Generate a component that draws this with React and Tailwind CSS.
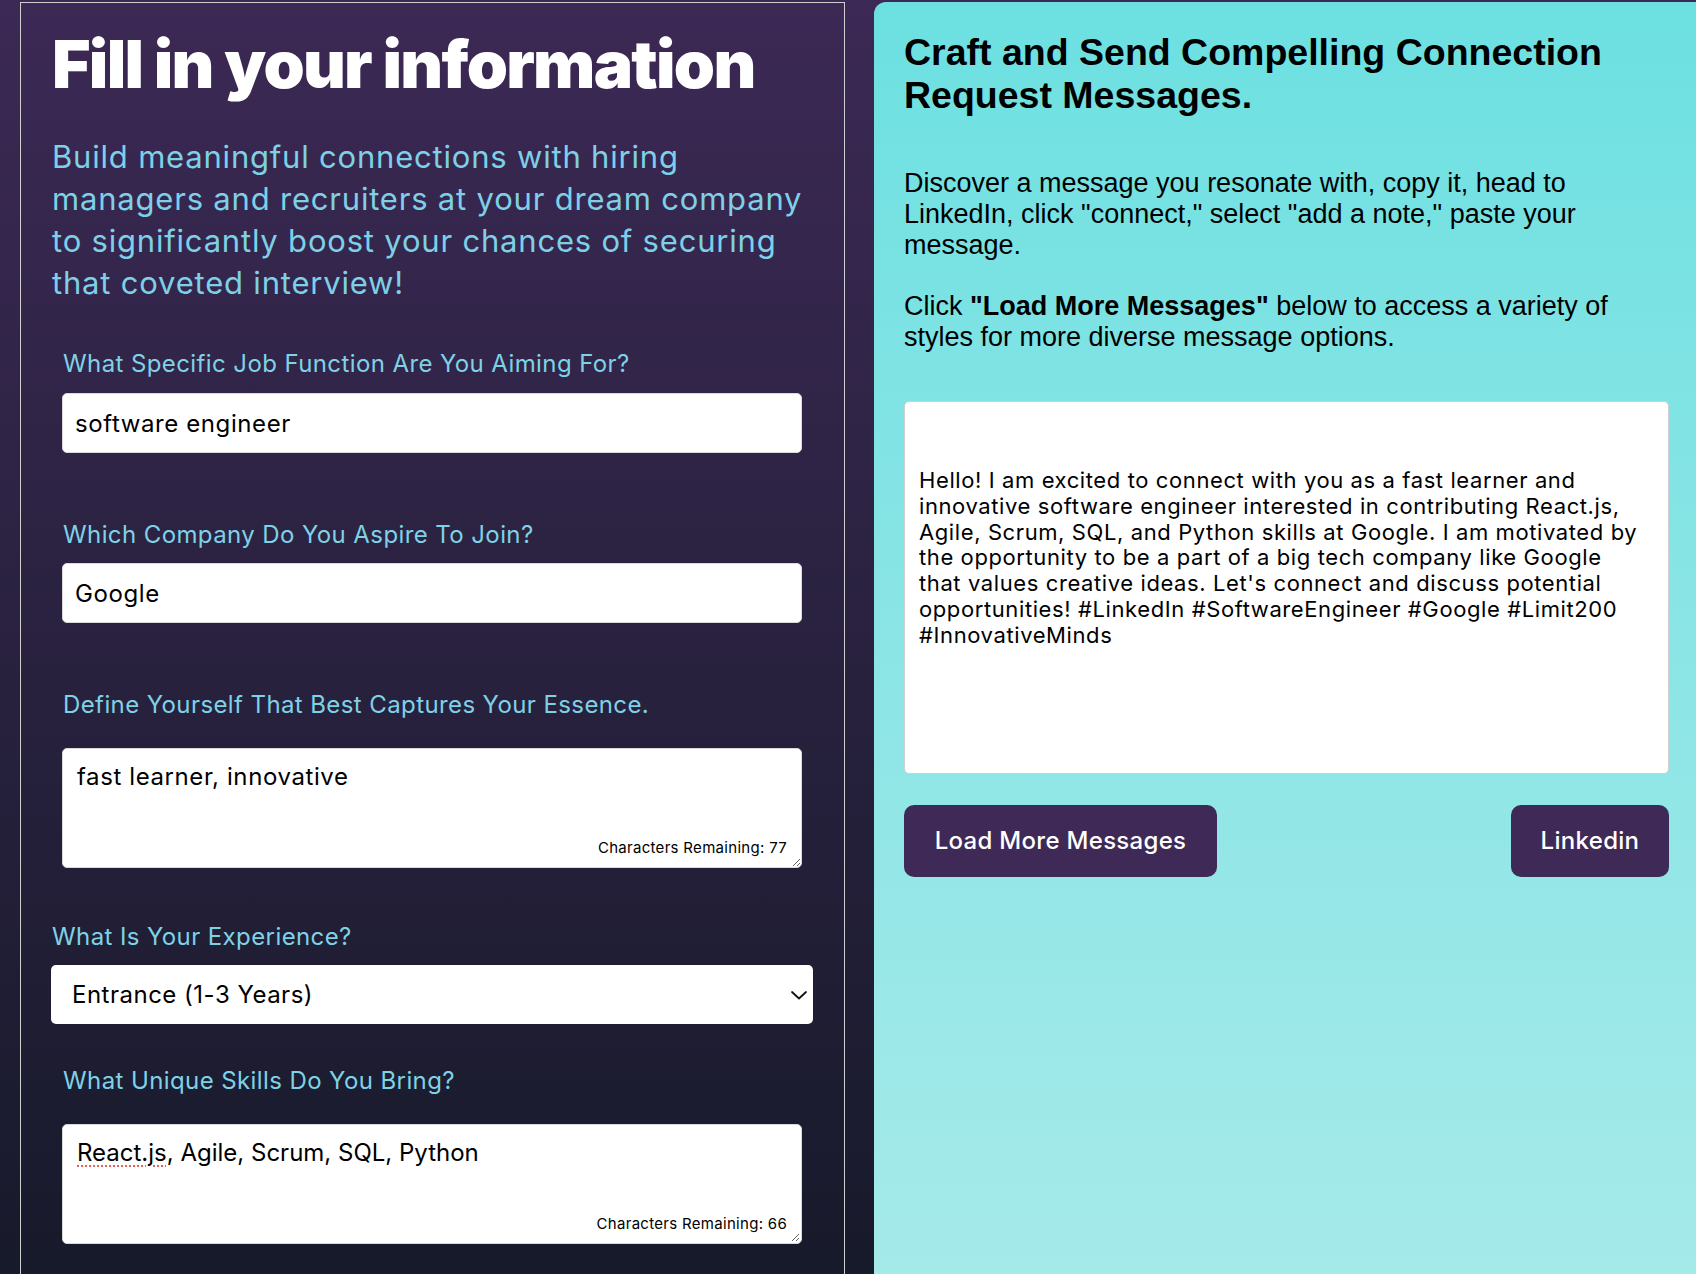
import React from "react";

const poppins = "font-['Inter','Noto_Sans',sans-serif]";

const introLines = [
  "Build meaningful connections with hiring",
  "managers and recruiters at your dream company",
  "to significantly boost your chances of securing",
  "that coveted interview!",
];

const messageLines = [
  "Hello! I am excited to connect with you as a fast learner and",
  "innovative software engineer interested in contributing React.js,",
  "Agile, Scrum, SQL, and Python skills at Google. I am motivated by",
  "the opportunity to be a part of a big tech company like Google",
  "that values creative ideas. Let's connect and discuss potential",
  "opportunities! #LinkedIn #SoftwareEngineer #Google #Limit200",
  "#InnovativeMinds",
];

const Label = ({ children, className = "" }) => (
  <label
    className={`block text-[24px] leading-[30px] tracking-[0.4px] text-[#7fd2e6] ${className}`}
  >
    {children}
  </label>
);

const TextBox = ({ value, remaining, underline }) => (
  <div className="relative w-[740px] h-[120px]">
    {underline ? (
      <div className="w-full h-full bg-white rounded-[5px] border border-[#d9d9d9] pl-[14px] pt-[11px] text-[24px] leading-[34px] text-black">
        <span className="underline decoration-dotted decoration-[#e0645a] decoration-2 underline-offset-4">
          React.js
        </span>
        , Agile, Scrum, SQL, Python
      </div>
    ) : (
      <textarea
        defaultValue={value}
        className="w-full h-full bg-white rounded-[5px] border border-[#d9d9d9] pl-[14px] pt-[11px] text-[24px] leading-[34px] tracking-[0.6px] text-black resize-y outline-none"
      />
    )}
    <span className="absolute right-[15px] bottom-[9px] text-[15px] tracking-[0.3px] text-black pointer-events-none">
      Characters Remaining: {remaining}
    </span>
    {underline && (
      <svg
        className="absolute right-[2px] bottom-[2px]"
        width="10"
        height="10"
        viewBox="0 0 10 10"
      >
        <path d="M9 2 L2 9 M9 6 L6 9" stroke="#666" strokeWidth="1" />
      </svg>
    )}
  </div>
);

export default function App() {
  return (
    <div
      className={`h-[1274px] overflow-hidden flex items-start pt-[2px] bg-linear-to-b from-[#3c2955] to-[#171a2b] ${poppins}`}
    >
      {/* form column */}
      <div className="ml-[20px] w-[825px] h-[1320px] shrink-0 border border-[#cfcfcf] pl-[31px] pt-[28px]">
        <h1 className="text-[66px] leading-[66px] font-black tracking-[-1.7px] text-white">
          Fill in your information
        </h1>
        <p className="mt-[39px] text-[31px] leading-[42px] tracking-[0.8px] text-[#7dd0e6]">
          {introLines.map((l) => (
            <span key={l} className="block whitespace-nowrap">
              {l}
            </span>
          ))}
        </p>

        <div className="ml-[10px] mt-[45px]">
          <Label className="ml-[1px]">
            What Specific Job Function Are You Aiming For?
          </Label>
          <input
            defaultValue="software engineer"
            className="mt-[14px] w-[740px] h-[60px] bg-white rounded-[5px] border border-[#d9d9d9] pl-[12px] text-[24px] tracking-[0.6px] text-black outline-none"
          />

          <Label className="ml-[1px] mt-[67px]">
            Which Company Do You Aspire To Join?
          </Label>
          <input
            defaultValue="Google"
            className="mt-[13px] w-[740px] h-[60px] bg-white rounded-[5px] border border-[#d9d9d9] pl-[12px] text-[24px] tracking-[0.6px] text-black outline-none"
          />

          <Label className="ml-[1px] mt-[67px] mb-[28px]">
            Define Yourself That Best Captures Your Essence.
          </Label>
          <TextBox value="fast learner, innovative" remaining={77} />
        </div>

        <Label className="mt-[54px]">What Is Your Experience?</Label>
        <div className="-ml-[1px] mt-[13px] w-[762px] h-[59px] bg-white rounded-[5px] flex items-center justify-between pl-[21px] pr-[5px]">
          <span className="text-[24px] tracking-[0.5px] text-black">
            Entrance (1-3 Years)
          </span>
          <svg width="18" height="18" viewBox="0 0 18 18" fill="none">
            <path
              d="M2 6 L9 12.5 L16 6"
              stroke="#111"
              strokeWidth="1.8"
              strokeLinecap="round"
              strokeLinejoin="round"
            />
          </svg>
        </div>

        <div className="ml-[10px] mt-[42px]">
          <Label className="ml-[1px] mb-[28px]">
            What Unique Skills Do You Bring?
          </Label>
          <TextBox remaining={66} underline />
        </div>
      </div>

      {/* message column */}
      <div className="ml-[29px] flex-1 h-[1320px] rounded-tl-[12px] bg-linear-to-b from-[#6ce0e1] to-[#a7eaea] pl-[30px] pr-[27px] pt-[29px]">
        <h2 className="font-['Liberation_Sans',Arial,sans-serif] font-bold text-[37.5px] leading-[43px] text-black">
          Craft and Send Compelling Connection
          <br />
          Request Messages.
        </h2>
        <div className="font-['Liberation_Sans',Arial,sans-serif] text-[27px] leading-[31px] text-black">
          <p className="mt-[51px]">
            Discover a message you resonate with, copy it, head to
            <br />
            LinkedIn, click "connect," select "add a note," paste your
            <br />
            message.
          </p>
          <p className="mt-[30px]">
            Click <b>"Load More Messages"</b> below to access a variety of
            <br />
            styles for more diverse message options.
          </p>
        </div>

        <div className="mt-[48px] h-[373px] bg-white rounded-[5px] border border-[#cfcfcf] pl-[14px] pt-[66px] text-[22px] leading-[25.8px] tracking-[0.6px] text-black">
          {messageLines.map((l) => (
            <span key={l} className="block whitespace-nowrap">
              {l}
            </span>
          ))}
        </div>

        <div className="mt-[31px] flex justify-between">
          <button className="w-[313px] h-[72px] rounded-[10px] bg-[#3f2957] text-white text-[24px] tracking-[0.3px] font-medium">
            Load More Messages
          </button>
          <button className="w-[158px] h-[72px] rounded-[10px] bg-[#3f2957] text-white text-[24px] tracking-[0.3px] font-medium">
            Linkedin
          </button>
        </div>
      </div>
    </div>
  );
}
